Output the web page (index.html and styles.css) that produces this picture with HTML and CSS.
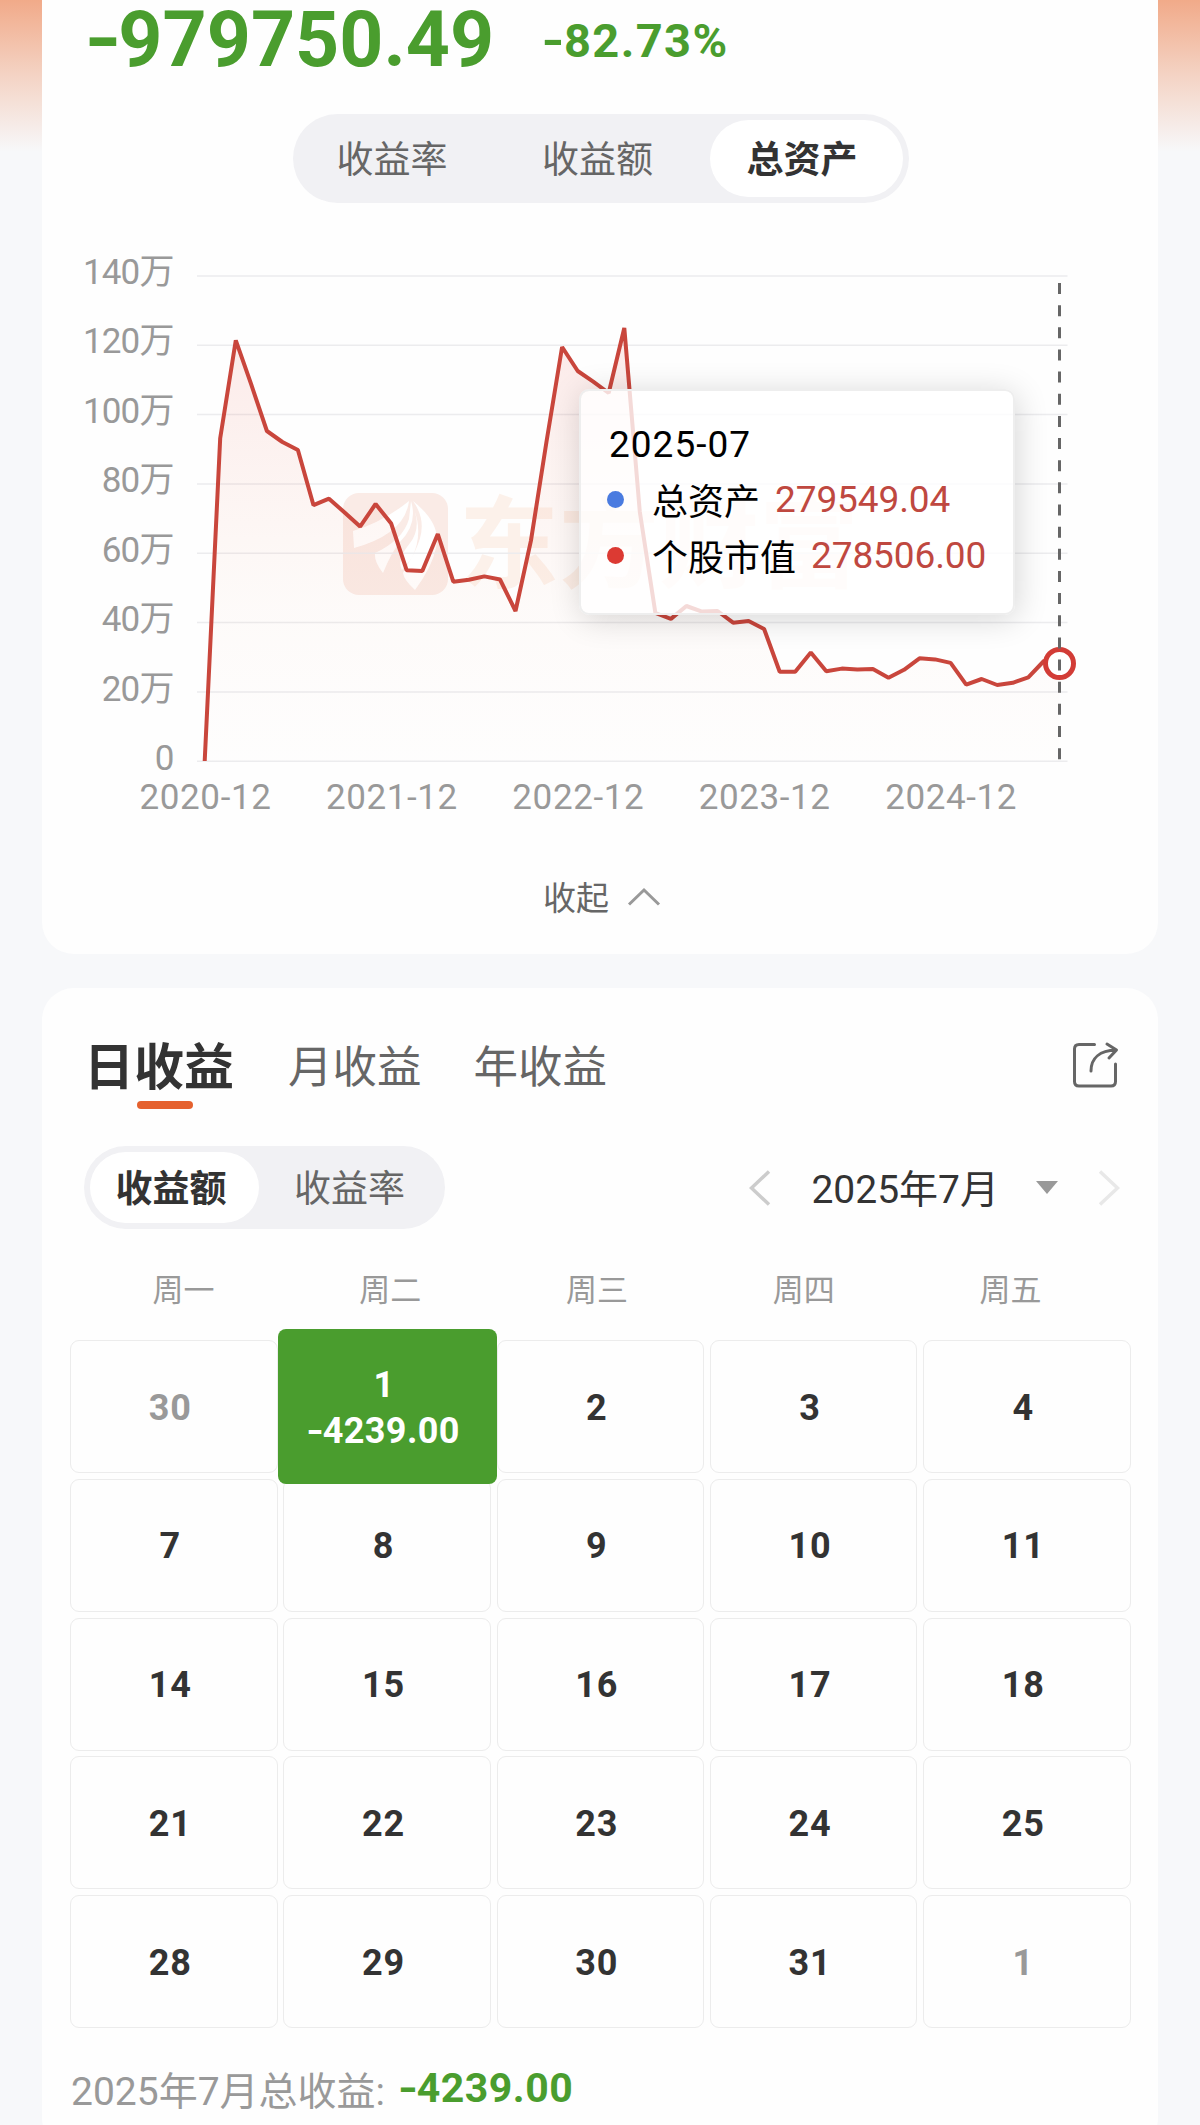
FILE: index.html
```html
<!DOCTYPE html>
<html lang="zh-CN">
<head>
    <meta charset="UTF-8">
    <meta name="viewport" content="width=device-width, initial-scale=1.0">
    <title>收益</title>
    <link rel="stylesheet" href="styles.css">
</head>
<body>
    <div class="page">
        <section class="card asset-card">
            <div class="summary">
                <span class="amount"><span class="minus">-</span>979750.49</span>
                <span class="rate"><span class="minus">-</span>82.73%</span>
            </div>
            <div class="segment segment-top">
                <span>收益率</span>
                <span>收益额</span>
                <span class="active">总资产</span>
            </div>
            <div class="chart">
                <svg class="chart-svg" viewBox="42 240 1116 600" width="1116" height="600">
                    <defs>
                        <linearGradient id="area" gradientUnits="userSpaceOnUse" x1="0" y1="328" x2="0" y2="761">
                            <stop offset="0" stop-color="#e8453c" stop-opacity="0.11"/>
                            <stop offset="0.65" stop-color="#e8703c" stop-opacity="0.025"/>
                            <stop offset="1" stop-color="#e8703c" stop-opacity="0.005"/>
                        </linearGradient>
                    </defs>
                    <!-- watermark -->
                    <g class="watermark">
                        <rect x="343" y="493" width="105" height="102" rx="16"/>
                        <path class="leaf" d="M353 531 Q383 522 409 501 Q405 534 354 548 Z"/>
                        <path class="leaf" d="M411 501 Q418 524 400 542 Q392 551 383 573 Q374 562 375 553 Q403 540 409 519 Z"/>
                        <path class="leaf" d="M413 501 Q442 524 436 548 Q432 567 415 590 Q404 580 403 573 C414 552 433 529 413 501 Z"/>
                        <path class="leaf" d="M411 503 Q423 526 410 543 Q396 560 402 570 L412 558 Q425 530 411 503 Z"/>
                        <text x="459" y="580" class="watermark-text">东方财富</text>
                    </g>
                    <!-- grid -->
                    <g class="grid">
                        <path d="M197 276H1067.5M197 345.3H1067.5M197 414.6H1067.5M197 483.9H1067.5M197 553.3H1067.5M197 622.4H1067.5M197 692H1067.5M197 761.3H1067.5"/>
                    </g>
                    <g class="axis-y">
                        <text x="173.500" y="284">140万</text>
                        <text x="173.500" y="353">120万</text>
                        <text x="173.500" y="423">100万</text>
                        <text x="173.500" y="492">80万</text>
                        <text x="173.500" y="562">60万</text>
                        <text x="173.500" y="631">40万</text>
                        <text x="173.500" y="701">20万</text>
                        <text x="173.500" y="770">0</text>
                    </g>
                    <g class="axis-x">
                        <text x="205.5" y="809">2020-12</text>
                        <text x="391.9" y="809">2021-12</text>
                        <text x="578.3" y="809">2022-12</text>
                        <text x="764.7" y="809">2023-12</text>
                        <text x="951.1" y="809">2024-12</text>
                    </g>
                    <path class="area" d="M204.7 761 L220.2 438.2 L235.8 340.3 L251.3 384.7 L266.9 431 L282.4 442 L297.9 450 L313.5 505.2 L329 498.7 L344.6 512.5 L360.1 526.6 L375.6 504 L391.2 523.6 L406.7 570.3 L422.3 571 L437.8 534 L453.3 581.7 L468.9 579.8 L484.4 576.4 L500 579.5 L515.5 611 L531 540.4 L546.6 441 L562.1 347 L577.7 371 L593.2 381.6 L608.7 393 L624.3 328 L639.8 511.7 L655.4 613 L670.9 618.9 L686.4 606 L702 611.6 L717.5 611 L733.1 622.7 L748.6 621 L764.1 629 L779.7 671.7 L795.2 671.7 L810.8 652.5 L826.3 671.3 L841.8 668.6 L857.4 669.4 L872.9 669 L888.5 677.8 L904 669.8 L919.5 658.3 L935.1 659.4 L950.6 662.9 L966.2 684.7 L981.7 679 L997.2 685 L1012.8 682.8 L1028.3 677.4 L1043.9 661 L1059.4 663 V761 Z"/>
                    <polyline class="line" points="204.7,761 220.2,438.2 235.8,340.3 251.3,384.7 266.9,431 282.4,442 297.9,450 313.5,505.2 329,498.7 344.6,512.5 360.1,526.6 375.6,504 391.2,523.6 406.7,570.3 422.3,571 437.8,534 453.3,581.7 468.9,579.8 484.4,576.4 500,579.5 515.5,611 531,540.4 546.6,441 562.1,347 577.7,371 593.2,381.6 608.7,393 624.3,328 639.8,511.7 655.4,613 670.9,618.9 686.4,606 702,611.6 717.5,611 733.1,622.7 748.6,621 764.1,629 779.7,671.7 795.2,671.7 810.8,652.5 826.3,671.3 841.8,668.6 857.4,669.4 872.9,669 888.5,677.8 904,669.8 919.5,658.3 935.1,659.4 950.6,662.9 966.2,684.7 981.7,679 997.2,685 1012.8,682.8 1028.3,677.4 1043.9,661 1059.4,663"/>
                    <circle class="marker" cx="1059.5" cy="663.5" r="14"/>
                    <path class="cursor" d="M1059.5 283V761"/>
                </svg>
                <div class="tooltip">
                    <div class="tooltip-title">2025-07</div>
                    <div class="tooltip-row">
                        <i class="dot dot-blue"></i>
                        <span>总资产</span>
                        <b>279549.04</b>
                    </div>
                    <div class="tooltip-row">
                        <i class="dot dot-red"></i>
                        <span>个股市值</span>
                        <b>278506.00</b>
                    </div>
                </div>
            </div>
            <div class="collapse">
                <span>收起</span>
                <svg width="34" height="20" viewBox="0 0 34 20"><path d="M2 17.5L17 3L32 17.5"/></svg>
            </div>
        </section>

        <section class="card profit-card">
            <div class="tabs">
                <div class="tab active">日收益</div>
                <div class="tab">月收益</div>
                <div class="tab">年收益</div>
                <svg class="share" width="48" height="48" viewBox="0 0 48 48">
                    <path d="M23.500 3.500H8Q3.500 3.500 3.500 8V40.500Q3.500 45 8 45H40Q44.500 45 44.500 40.500V23"/>
                    <path d="M20 30C20 17 29 9.500 45 9M36 3L45.500 9L38 17"/>
                </svg>
            </div>
            <div class="toolbar">
                <div class="segment segment-small">
                    <span class="active">收益额</span>
                    <span>收益率</span>
                </div>
                <div class="month-picker">
                    <svg class="prev" width="22" height="36" viewBox="0 0 22 36"><path d="M20 1.500L2.500 18L20 34.500"/></svg>
                    <span class="month">2025年7月</span>
                    <svg class="caret" width="22" height="13" viewBox="0 0 22 13"><path d="M0 0H22L11 13Z"/></svg>
                    <svg class="next" width="22" height="36" viewBox="0 0 22 36"><path d="M2 1.500L19.500 18L2 34.500"/></svg>
                </div>
            </div>
            <div class="weekdays">
                <span>周一</span>
                <span>周二</span>
                <span>周三</span>
                <span>周四</span>
                <span>周五</span>
            </div>
            <div class="calendar">
                <div class="day other">30</div>
                <div class="day selected"><span>1</span><span><span class="minus">-</span>4239.00</span></div>
                <div class="day">2</div>
                <div class="day">3</div>
                <div class="day">4</div>
                <div class="day">7</div>
                <div class="day">8</div>
                <div class="day">9</div>
                <div class="day">10</div>
                <div class="day">11</div>
                <div class="day">14</div>
                <div class="day">15</div>
                <div class="day">16</div>
                <div class="day">17</div>
                <div class="day">18</div>
                <div class="day">21</div>
                <div class="day">22</div>
                <div class="day">23</div>
                <div class="day">24</div>
                <div class="day">25</div>
                <div class="day">28</div>
                <div class="day">29</div>
                <div class="day">30</div>
                <div class="day">31</div>
                <div class="day other">1</div>
            </div>
            <div class="total">
                <span>2025年7月总收益:</span>
                <b><span class="minus">-</span>4239.00</b>
            </div>
        </section>
    </div>
</body>
</html>
```

FILE: styles.css
```css
body, html {
    margin: 0;
    padding: 0;
    font-family: Roboto, "Noto Sans CJK SC", sans-serif;
    color: #333;
}
* {
    box-sizing: border-box;
}
svg {
    display: block;
    fill: none;
}
.page {
    width: 1200px;
    height: 2125px;
    overflow: hidden;
    padding: 0 42px;
    background: linear-gradient(#f1aa89 0, #f4d3c4 75px, #f7f8fa 152px);
}
.card {
    background: #fefefe;
    border-radius: 32px;
}
.asset-card {
    height: 954px;
    border-radius: 0 0 32px 32px;
}
.minus {
    display: inline-block;
    transform: scaleX(1.25);
}

/* summary */
.summary {
    display: flex;
    height: 114px;
    padding-left: 46px;
    color: #4a9d2e;
    font-weight: bold;
    white-space: nowrap;
}
.amount {
    width: 456px;
    font-size: 77px;
    line-height: 81px;
}
.rate {
    font-size: 47px;
    line-height: 82px;
    letter-spacing: 1.4px;
}

/* segmented control */
.segment {
    display: grid;
    padding: 6px;
    background: #f1f1f4;
    border-radius: 45px;
    font-size: 37px;
    color: #666;
}
.segment span {
    display: flex;
    align-items: center;
    justify-content: center;
    padding-bottom: 3px;
    border-radius: 40px;
}
.segment .active {
    background: #fff;
    color: #333;
    font-weight: bold;
}
.segment-top {
    width: 616px;
    height: 89px;
    margin-left: 251px;
    grid-template-columns: 186px 225px 193px;
}
.segment-top .active {
    padding-right: 9px;
}
.segment-small {
    width: 361px;
    height: 83px;
    grid-template-columns: 169px 181px;
}
.segment-small .active {
    padding-right: 7px;
}

/* chart */
.chart {
    position: relative;
    margin-top: 37px;
}
.watermark rect {
    fill: #faebe6;
}
.watermark .leaf {
    fill: #fff;
}
.watermark-text {
    font-size: 100px;
    font-weight: bold;
    fill: #fcf1ea;
}
.grid path {
    stroke: #ececee;
    stroke-width: 1.5;
}
.axis-y text, .axis-x text {
    font-size: 35px;
    fill: #999;
}
.axis-y text {
    text-anchor: end;
    letter-spacing: -0.9px;
}
.axis-x text {
    text-anchor: middle;
    letter-spacing: 0.6px;
}
.area {
    fill: url(#area);
}
.line {
    stroke: #c9463c;
    stroke-width: 4;
    stroke-linejoin: bevel;
}
.marker {
    fill: #fff;
    stroke: #d23c36;
    stroke-width: 5;
}
.cursor {
    stroke: #666;
    stroke-width: 3;
    stroke-dasharray: 11 11.15;
}
.tooltip {
    position: absolute;
    left: 537px;
    top: 149px;
    width: 436px;
    height: 226px;
    padding: 28px 26px;
    background: rgba(255, 255, 255, 0.8);
    border: 2px solid #eee;
    border-radius: 10px;
    background-clip: padding-box;
    box-shadow: 2px 4px 32px rgba(0, 0, 0, 0.16);
    color: #000;
    font-size: 36px;
    white-space: nowrap;
}
.tooltip-title {
    padding-left: 2px;
    font-size: 37px;
    line-height: 52px;
    letter-spacing: 1px;
}
.tooltip-row {
    display: flex;
    align-items: center;
    height: 56px;
}
.tooltip-row b {
    margin-left: 15px;
    font-size: 37px;
    font-weight: normal;
    letter-spacing: -0.1px;
    color: #bf4840;
}
.dot {
    width: 17px;
    height: 17px;
    margin-right: 28px;
    border-radius: 50%;
}
.dot-blue {
    background: #4a7be0;
}
.dot-red {
    background: #dc3a33;
}
.collapse {
    display: flex;
    align-items: center;
    justify-content: center;
    gap: 18px;
    height: 114px;
    padding-left: 4px;
    font-size: 33px;
    color: #666;
}
.collapse span {
    padding-bottom: 2px;
}
.collapse path {
    stroke: #999;
    stroke-width: 3;
}

/* profit card */
.profit-card {
    height: 1162px;
    margin-top: 34px;
    padding: 37px 28px 0;
}
.tabs {
    display: flex;
    align-items: center;
    height: 80px;
    padding-left: 14px;
    font-size: 44.500px;
    color: #666;
}
.tab {
    padding-bottom: 4px;
    margin-right: 52px;
}
.tab.active {
    position: relative;
    margin-right: 54px;
    font-size: 50px;
    font-weight: bold;
    color: #333;
}
.tab.active::after {
    content: "";
    position: absolute;
    left: 53px;
    bottom: -6px;
    width: 56px;
    height: 8px;
    border-radius: 4px;
    background: #e5612e;
}
.share {
    margin-left: auto;
    margin-right: 11px;
}
.share path {
    stroke: #666;
    stroke-width: 3;
    stroke-linecap: round;
    stroke-linejoin: round;
}
.toolbar {
    display: flex;
    justify-content: space-between;
    margin-top: 41px;
    padding: 0 10px 0 14px;
}
.month-picker {
    display: flex;
    align-items: center;
}
.month {
    margin-left: 40px;
    padding-bottom: 4px;
    font-size: 39px;
}
.prev path {
    stroke: #ccc;
    stroke-width: 3.5;
}
.caret {
    margin: 0 40px 0 37px;
}
.caret path {
    fill: #999;
}
.next path {
    stroke: #e8e8e8;
    stroke-width: 3.5;
}
.weekdays {
    display: grid;
    grid-template-columns: repeat(5, 1fr);
    margin: 39px 16px 0 10px;
    font-size: 31px;
    line-height: 46px;
    text-align: center;
    color: #999;
}
.calendar {
    display: grid;
    grid-template-columns: repeat(5, 207.5px);
    grid-auto-rows: 133px;
    gap: 5.75px;
    margin-top: 26px;
}
.day {
    display: flex;
    align-items: center;
    justify-content: center;
    padding: 2px 7px 0 0;
    border: 1px solid #ececec;
    border-radius: 9px;
    font-size: 36px;
    font-weight: bold;
    letter-spacing: 0.8px;
}
.day.other {
    color: #999;
}
.day.selected {
    z-index: 1;
    flex-direction: column;
    margin: -11px -6px -11px -5px;
    border: none;
    border-radius: 8px;
    background: #4a9d2e;
    color: #fff;
    line-height: 46px;
    letter-spacing: 0.4px;
}
.total {
    display: flex;
    align-items: center;
    gap: 15px;
    height: 60px;
    margin-top: 30px;
    padding-left: 1px;
    font-size: 39px;
    color: #999;
}
.total b {
    font-size: 41px;
    letter-spacing: 0.5px;
    color: #4a9d2e;
}
```
